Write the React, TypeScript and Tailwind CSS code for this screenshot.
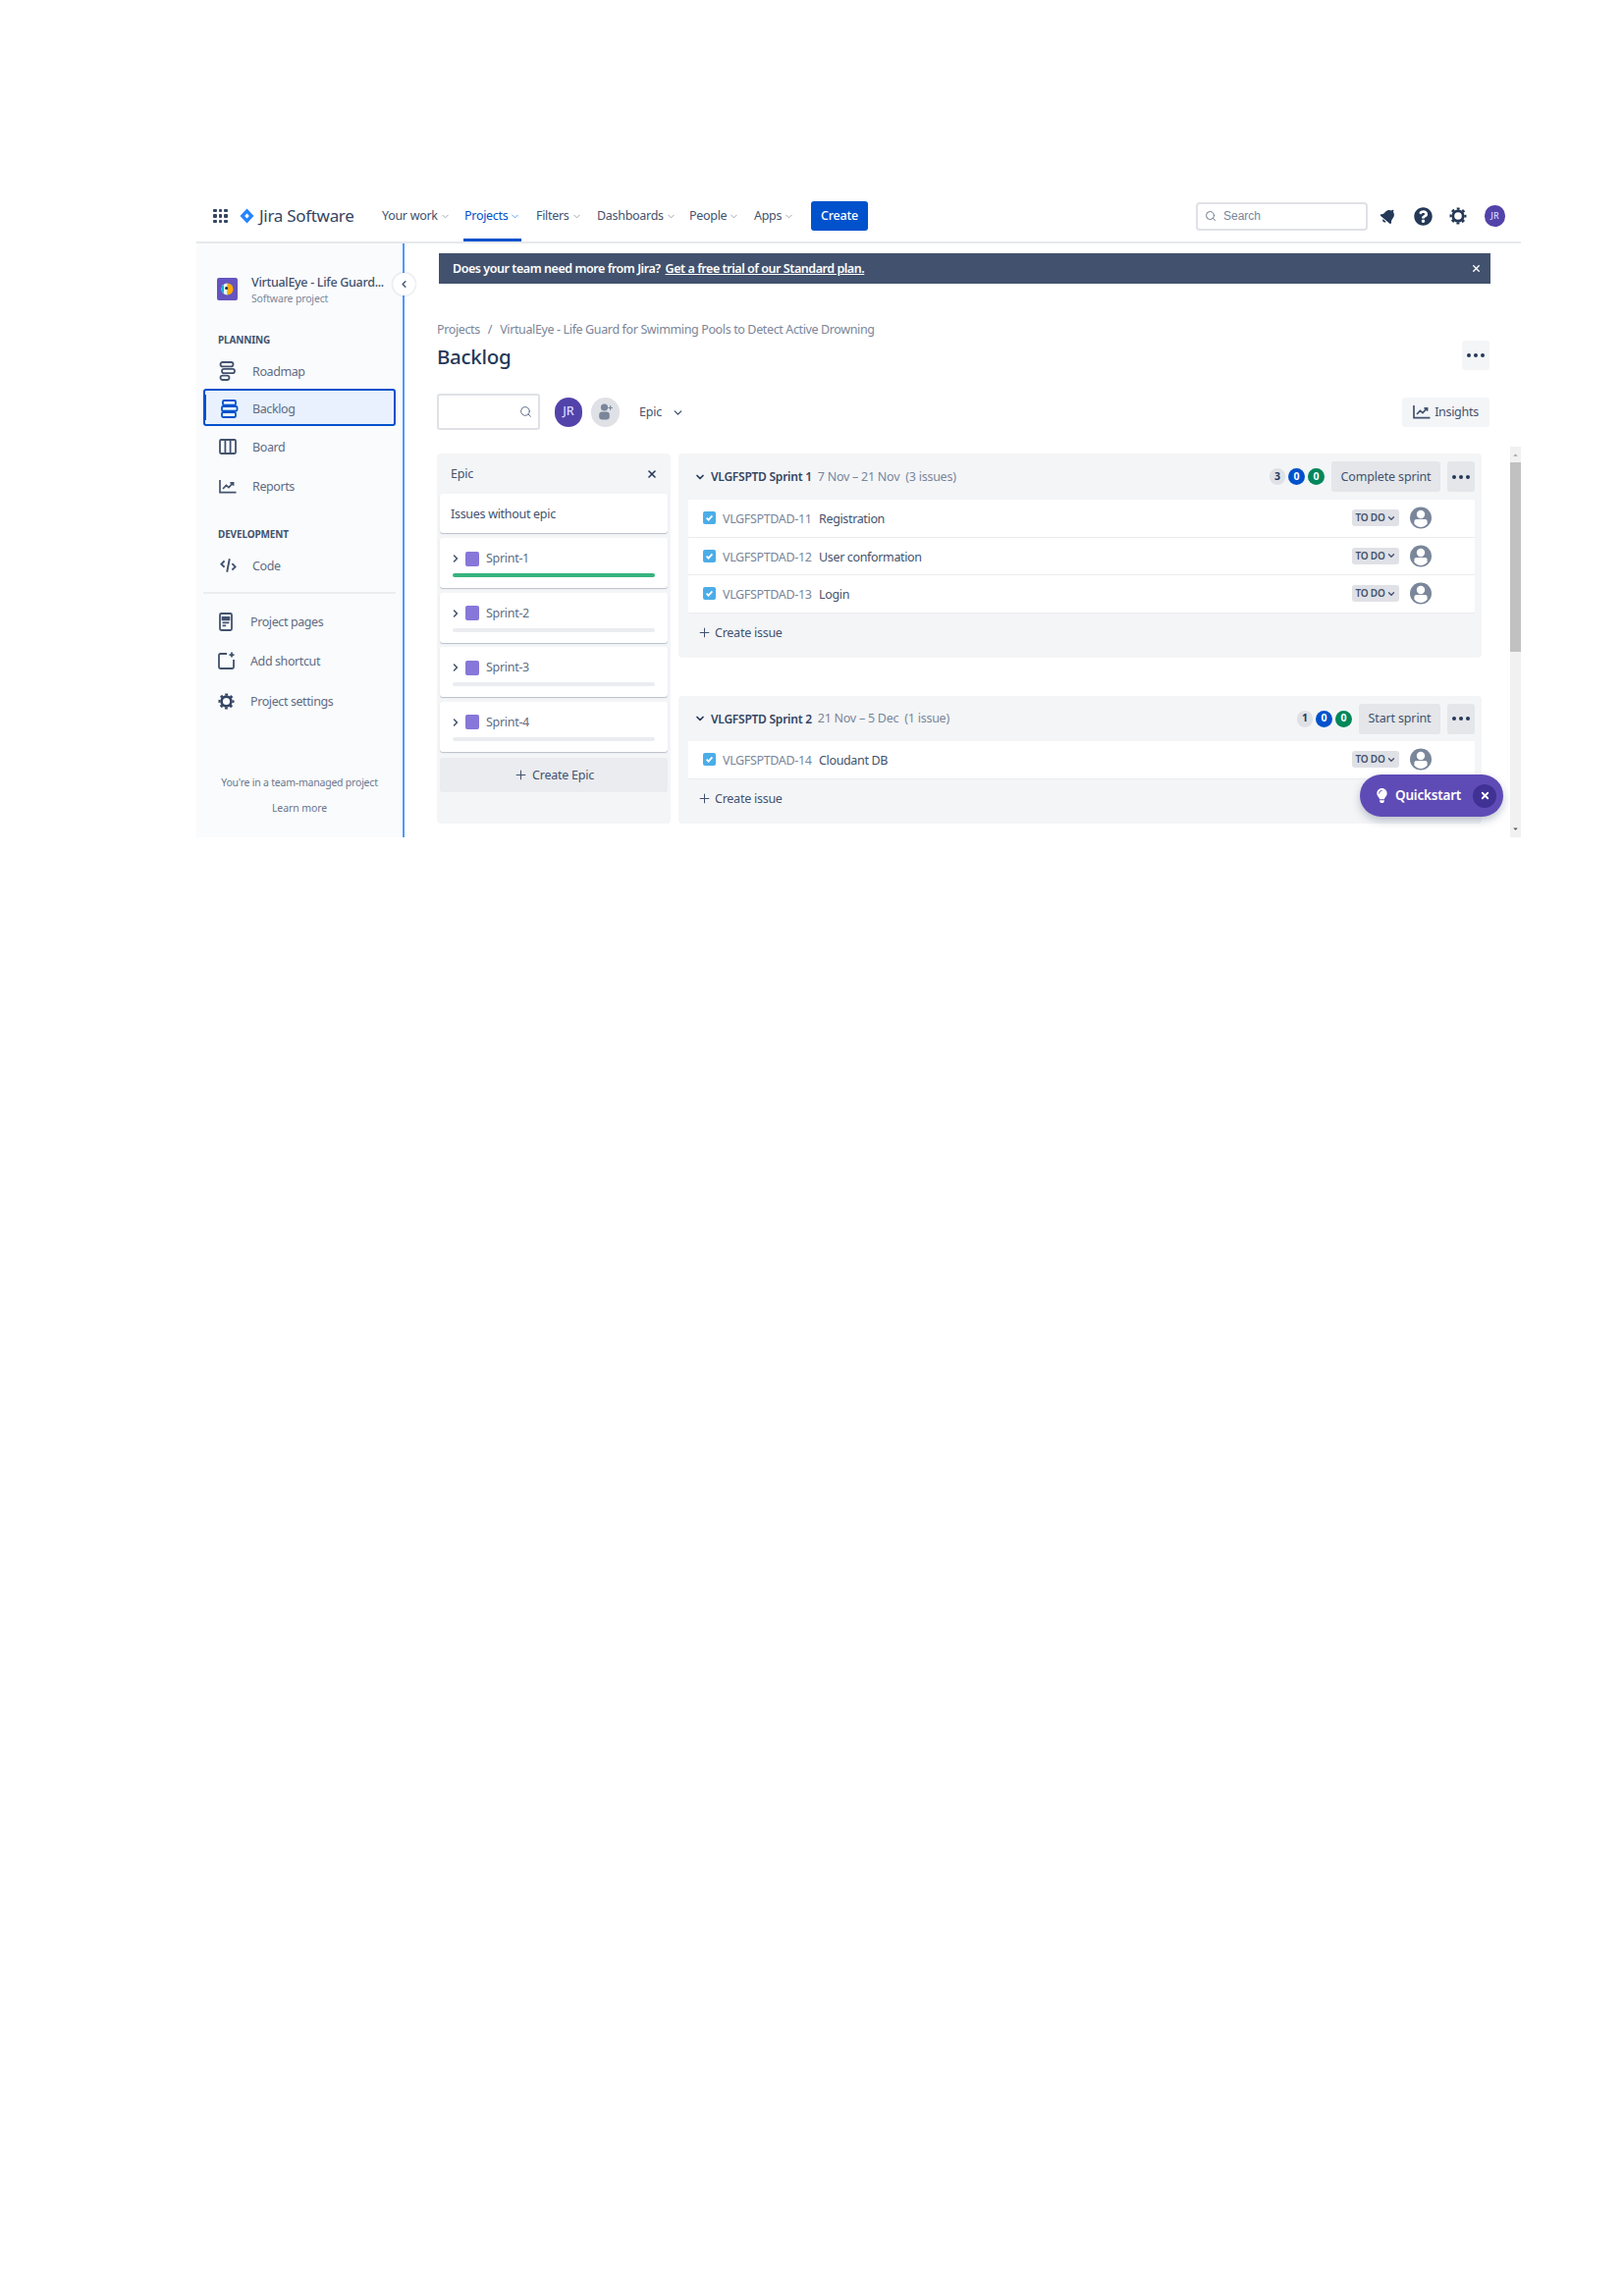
import { ChevronDown, ChevronLeft, ChevronRight, Plus, Search, X } from "lucide-react";
import { FaBell, FaLightbulb, FaQuestionCircle } from "react-icons/fa";

const navItems = [
  { label: "Your work", width: "w-[84px]" },
  { label: "Projects", width: "w-[73px]", active: true },
  { label: "Filters", width: "w-[62px]" },
  { label: "Dashboards", width: "w-[94px]" },
  { label: "People", width: "w-[66px]" },
  { label: "Apps", width: "w-[58px]" },
];

const RoadmapIcon = () => (
  <svg width="18" height="20" viewBox="0 0 18 20" fill="none" stroke="#42526e" strokeWidth="1.8">
    <rect x="1.5" y="1" width="13" height="4.4" rx="2.2" />
    <rect x="3" y="7.8" width="13" height="4.4" rx="2.2" />
    <rect x="1.5" y="14.6" width="9" height="4.4" rx="2.2" />
  </svg>
);

const BacklogIcon = () => (
  <svg width="18" height="19" viewBox="0 0 18 19" fill="none" stroke="#0052cc" strokeWidth="1.8">
    <rect x="2" y="1" width="13" height="4.6" rx="1.2" />
    <rect x="1" y="7" width="15.5" height="4.6" rx="1.2" />
    <rect x="1" y="13" width="14" height="5" rx="1.2" />
  </svg>
);

const BoardIcon = () => (
  <svg width="18" height="16" viewBox="0 0 18 16" fill="none" stroke="#42526e" strokeWidth="1.8">
    <rect x="1" y="1" width="16" height="14" rx="1.2" />
    <path d="M6.4 1v14M11.6 1v14" />
  </svg>
);

const ChartIcon = ({ color = "#42526e" }: { color?: string }) => (
  <svg width="18" height="15" viewBox="0 0 18 15" fill="none" stroke={color} strokeWidth="1.7">
    <path d="M1 1v12.6h16.5" />
    <path d="M4 10l3.4-3.6 2.6 2.2 4-4.4M11.4 3.8h3.2v3" />
  </svg>
);

const CodeIcon = () => (
  <svg width="17" height="16" viewBox="0 0 17 16" fill="none" stroke="#42526e" strokeWidth="1.9">
    <path d="M4.6 3.4L1.4 6.8l3.2 3M12.4 6.2l3.2 3.2-3.2 3.2M9.8 1.2L7.2 14.8" />
  </svg>
);

const PagesIcon = () => (
  <svg width="14" height="19" viewBox="0 0 14 19" fill="none" stroke="#42526e" strokeWidth="1.8">
    <rect x="1" y="1" width="12" height="17" rx="1.4" />
    <path d="M3.6 5h6.8v2.4H3.6z" fill="#42526e" />
    <path d="M3.6 10.4h6.8M3.6 13.4h3.6" />
  </svg>
);

const ShortcutIcon = () => (
  <svg width="17" height="18" viewBox="0 0 17 18" fill="none" stroke="#42526e" strokeWidth="1.8">
    <path d="M9 2H2.4C1.6 2 1 2.6 1 3.4v12.2c0 .8.6 1.4 1.4 1.4h12.2c.8 0 1.4-.6 1.4-1.4V8" />
    <path d="M14 .6v5M11.5 3.1h5" />
  </svg>
);

// ring plus a dashed outer circle, which reads as the eight teeth
const GearIcon = ({ size, color = "#253858" }: { size: number; color?: string }) => (
  <svg width={size} height={size} viewBox="0 0 18 18" fill="none" stroke={color}>
    <circle cx="9" cy="9" r="5.2" strokeWidth="2.8" />
    <circle cx="9" cy="9" r="7.4" strokeWidth="2.2" strokeDasharray="3 2.81" strokeDashoffset="1.5" />
  </svg>
);

const ProjectIcon = () => (
  <svg width="21" height="23" viewBox="0 0 21 23">
    <rect width="21" height="23" rx="2" fill="#6554c0" />
    <path d="M10.5 5.5a6 6 0 016 6 6 6 0 01-6 6z" fill="#ffab00" />
    <path d="M10.5 5.5a6 6 0 00-6 6 6 6 0 006 6z" fill="#e3fcef" />
    <path d="M4.5 11.5a6 6 0 012.5-4.8v9.6a6 6 0 01-2.5-4.8z" fill="#00b8d9" />
    <circle cx="9.6" cy="10.4" r="1.5" fill="#172b4d" />
  </svg>
);

const AddPersonIcon = () => (
  <svg width="16" height="17" viewBox="0 0 16 17" fill="#7a869a">
    <circle cx="6.5" cy="4" r="3.6" />
    <rect x="1.2" y="8.6" width="10.6" height="7.8" rx="3.2" />
    <path d="M12.6 2.2v4.6M10.3 4.5h4.6" stroke="#7a869a" strokeWidth="1.2" />
  </svg>
);

const Assignee = () => (
  <svg width="22" height="23" viewBox="0 0 22 23">
    <circle cx="11" cy="11.5" r="11" fill="#7a869a" />
    <circle cx="11" cy="8" r="4.2" fill="#fff" />
    <path d="M4.4 15c0-1.2 1-2 2.2-2h8.8c1.2 0 2.2.8 2.2 2v2.4a8 8 0 01-13.2 0z" fill="#fff" />
  </svg>
);

const IssueCheck = () => (
  <span className="flex h-[13px] w-[13px] shrink-0 items-center justify-center rounded-[2px] bg-[#4bade8]">
    <svg width="9" height="9" viewBox="0 0 9 9" fill="none" stroke="#fff" strokeWidth="1.8">
      <path d="M1.6 4.6l2 2 3.8-4.2" />
    </svg>
  </span>
);

const Dots = () => (
  <span className="flex gap-[3px]">
    <span className="h-[4px] w-[4px] rounded-full bg-[#253858]" />
    <span className="h-[4px] w-[4px] rounded-full bg-[#253858]" />
    <span className="h-[4px] w-[4px] rounded-full bg-[#253858]" />
  </span>
);

function SideItem({ icon, label, className = "", labelClass = "" }: { icon: React.ReactNode; label: string; className?: string; labelClass?: string }) {
  return (
    <div className={`flex h-[38px] items-center ${className}`}>
      <span className="flex w-[50px] shrink-0 justify-center">{icon}</span>
      <span className={`mt-[2px] text-[12.5px] tracking-[-0.4px] text-[#5e6c84] ${labelClass}`}>{label}</span>
    </div>
  );
}

function EpicCard({ name, done }: { name: string; done?: boolean }) {
  return (
    <div className="h-[51px] rounded-[3px] bg-white px-[13px] pt-[12px] shadow-[0_1px_1px_rgba(9,30,66,0.25)]">
      <div className="flex h-[18px] items-center">
        <ChevronRight size={12} strokeWidth={3} className="ml-[-3px] text-[#42526e]" />
        <span className="ml-[4px] h-[15px] w-[14px] rounded-[2px] bg-[#8777d9]" />
        <span className="ml-[7px] mt-[1px] text-[12.5px] tracking-[-0.3px] text-[#5e6c84]">{name}</span>
      </div>
      <div className={`mt-[6px] h-[4px] rounded-full ${done ? "bg-[#36b37e]" : "bg-[#ebecf0]"}`} />
    </div>
  );
}

function IssueRow({ id, title }: { id: string; title: string }) {
  return (
    <div className="flex h-[38.6px] items-center border-b border-[#ebecf0] bg-white pl-[15px]">
      <IssueCheck />
      <span className="ml-[7px] mt-[3px] w-[98px] text-[12.5px] tracking-[-0.35px] text-[#7a869a]">{id}</span>
      <span className="mt-[3px] text-[12.5px] tracking-[-0.35px] text-[#42526e]">{title}</span>
      <span className="ml-auto flex h-[17px] w-[48px] items-center justify-center gap-[1px] rounded-[3px] bg-[#dfe1e6] text-[10px] font-semibold tracking-[-0.2px] text-[#42526e]">
        TO DO
        <ChevronDown size={10} strokeWidth={3.2} />
      </span>
      <span className="ml-[11px] mr-[44px] flex">
        <Assignee />
      </span>
    </div>
  );
}

function CountBadges({ todo }: { todo: number }) {
  return (
    <div className="flex items-center gap-[3px] text-[10.5px] font-bold">
      <span className="flex h-[17px] w-[16px] items-center justify-center rounded-full bg-[#dfe1e6] text-[#253858]">{todo}</span>
      <span className="flex h-[17px] w-[17px] items-center justify-center rounded-full bg-[#0052cc] text-white">0</span>
      <span className="flex h-[17px] w-[17px] items-center justify-center rounded-full bg-[#00875a] text-white">0</span>
    </div>
  );
}

function SprintPanel({ name, dates, count, todo, action, actionWidth, headerHeight, children, className = "" }: {
  name: string;
  dates: string;
  count: string;
  todo: number;
  action: string;
  actionWidth: string;
  headerHeight: string;
  children: React.ReactNode;
  className?: string;
}) {
  return (
    <div className={`rounded-[4px] bg-[#f4f5f7] pl-[10px] pr-[7px] ${className}`}>
      <div className={`flex items-center ${headerHeight}`}>
        <ChevronDown size={12} strokeWidth={3.4} className="ml-[6px] text-[#253858]" />
        <span className="ml-[5px] mt-[1px] text-[12px] font-semibold tracking-[-0.25px] text-[#344563]">{name}</span>
        <span className="ml-[6px] mt-[1px] text-[12.5px] tracking-[-0.25px] text-[#7a869a]">{dates}</span>
        <span className="ml-[6px] mt-[1px] text-[12.5px] tracking-[-0.25px] text-[#7a869a]">{count}</span>
        <div className="ml-auto flex items-center">
          <CountBadges todo={todo} />
          <span className={`ml-[7px] flex h-[31px] items-center justify-center rounded-[3px] bg-[#e4e6ea] pt-[1px] text-[12.5px] tracking-[-0.15px] text-[#42526e] ${actionWidth}`}>
            {action}
          </span>
          <span className="ml-[7px] flex h-[31px] w-[28px] items-center justify-center rounded-[3px] bg-[#e4e6ea]">
            <Dots />
          </span>
        </div>
      </div>
      {children}
      <div className="flex h-[39px] items-center pl-[9px] text-[12.5px] tracking-[-0.25px] text-[#42526e]">
        <Plus size={15} strokeWidth={1.6} />
        <span className="ml-[3px] mt-[2px]">Create issue</span>
      </div>
    </div>
  );
}

export default function App() {
  return (
    <div className="min-h-[2339px] bg-white pl-[200px] pt-[204px] font-['Noto_Sans',sans-serif]">
      <div className="relative w-[1349px]">
        <header className="flex h-[44px] items-center border-b-2 border-[#e6e8ec] pb-[10px] pl-[17px]">
          <div className="grid w-[15px] grid-cols-3 gap-[2px]">
            {[1, 2, 3, 4, 5, 6, 7, 8, 9].map((n) => (
              <span key={n} className="h-[3.6px] w-[3.6px] rounded-[1px] bg-[#344563]" />
            ))}
          </div>
          <svg className="ml-[12px]" width="15" height="16" viewBox="0 0 15 16">
            <path d="M7.5 0.5l7 7.5-7 7.5-7-7.5z" fill="#2684ff" />
            <path d="M7.5 5.5l2.4 2.5-2.4 2.5-2.4-2.5z" fill="#fff" />
          </svg>
          <span className="ml-[5px] w-[125px] text-[17px] tracking-[-0.3px] text-[#344563]">Jira Software</span>
          {navItems.map((item) => (
            <div key={item.label} className={`relative flex h-full items-center text-[12.5px] tracking-[-0.3px] ${item.width} ${item.active ? "text-[#0052cc]" : "text-[#42526e]"}`}>
              {item.label}
              <ChevronDown size={11} strokeWidth={2} className={`ml-[2px] ${item.active ? "text-[#4c9aff]" : "text-[#97a0af]"}`} />
              {item.active && <span className="absolute bottom-[-10px] left-[-1px] h-[3px] w-[59px] bg-[#0052cc]" />}
            </div>
          ))}
          <span className="flex h-[30px] w-[58px] items-center justify-center rounded-[3px] bg-[#0052cc] text-[12.5px] font-medium tracking-[-0.2px] text-white">Create</span>
          <div className="ml-[334px] flex h-[29px] w-[175px] items-center rounded-[4px] border-2 border-[#dfe1e6] pl-[7px] font-['Liberation_Sans',sans-serif] text-[12px] text-[#7a869a]">
            <Search size={12} strokeWidth={1.8} className="text-[#5e6c84]" />
            <span className="ml-[7px]">Search</span>
          </div>
          <FaBell size={16} className="ml-[13px] rotate-[40deg] text-[#253858]" />
          <FaQuestionCircle size={19} className="ml-[18px] text-[#253858]" />
          <span className="ml-[17px] flex">
            <GearIcon size={18} />
          </span>
          <span className="ml-[18px] flex h-[22px] w-[21px] items-center justify-center rounded-full bg-[#5243aa] text-[9px] font-medium text-[#dcd6ff]">JR</span>
        </header>

        <div className="flex h-[605px]">
          <aside className="relative w-[212px] shrink-0 border-r-2 border-[#4c9aff] bg-[#fafbfc] px-[7px] pt-[34px]">
            <div className="flex h-[24px] items-center pl-[14px]">
              <ProjectIcon />
              <div className="ml-[14px] mt-[3px]">
                <div className="text-[12.5px] font-medium leading-[17px] tracking-[-0.3px] text-[#42526e]">VirtualEye - Life Guard...</div>
                <div className="text-[10.5px] leading-[17px] tracking-[-0.17px] text-[#7a869a]">Software project</div>
              </div>
            </div>
            <div className="mt-[31px] pl-[15px] text-[10px] font-bold leading-[18px] tracking-[-0.15px] text-[#42526e]">PLANNING</div>
            <div className="mt-[3px]">
              <SideItem icon={<RoadmapIcon />} label="Roadmap" className="pt-[2px]" />
              <SideItem icon={<BacklogIcon />} label="Backlog" labelClass="-ml-[2px]" className="relative rounded-[3px] border-2 border-[#0052cc] bg-[#deebff]/60 pt-[2px] before:absolute before:left-[-2px] before:top-[4px] before:h-[26px] before:w-[3px] before:bg-[#0052cc]" />
              <SideItem icon={<BoardIcon />} label="Board" className="mt-[1px] !h-[40px]" />
              <SideItem icon={<ChartIcon />} label="Reports" className="!h-[40px]" />
            </div>
            <div className="mt-[22px] pl-[15px] text-[10px] font-bold leading-[14px] tracking-[-0.15px] text-[#42526e]">DEVELOPMENT</div>
            <SideItem icon={<CodeIcon />} label="Code" className="mt-[6px]" />
            <div className="mt-[8px] h-[2px] bg-[#ebecf0]" />
            <div className="mt-[9px]">
              <SideItem icon={<PagesIcon />} label="Project pages" className="-ml-[2px]" />
              <SideItem icon={<ShortcutIcon />} label="Add shortcut" className="mt-[2px] -ml-[2px]" />
              <SideItem icon={<GearIcon size={17} color="#344563" />} label="Project settings" className="mt-[3px] -ml-[2px]" />
            </div>
            <div className="mt-[55px] text-center text-[10.5px] leading-[18px] tracking-[-0.22px] text-[#6b778c]">You're in a team-managed project</div>
            <div className="mt-[8px] text-center text-[10.5px] leading-[18px] tracking-[-0.1px] text-[#6b778c]">Learn more</div>
            <span className="absolute right-[-13px] top-[30px] flex h-[23px] w-[23px] items-center justify-center rounded-full bg-white shadow-[0_0_2px_rgba(9,30,66,0.3)]">
              <ChevronLeft size={11} strokeWidth={3} className="text-[#42526e]" />
            </span>
          </aside>

          <main className="flex min-w-0 flex-1 flex-col">
            <div className="px-[33px]">
              <div className="ml-[2px] mr-[-2px] mt-[10px] flex h-[31px] items-center bg-[#42526e] pl-[14px] pr-[9px] text-[12.5px] font-semibold tracking-[-0.45px] text-white">
                <span className="mt-[2px]">Does your team need more from Jira?</span>
                <span className="ml-[5px] mt-[2px] underline">Get a free trial of our Standard plan.</span>
                <X size={11} strokeWidth={3} className="ml-auto" />
              </div>
              <div className="mt-[38px] flex h-[18px] items-center text-[12.5px] tracking-[-0.37px] text-[#7a869a]">
                <span>Projects</span>
                <span className="mx-[8px]">/</span>
                <span>VirtualEye - Life Guard for Swimming Pools to Detect Active Drowning</span>
              </div>
              <div className="mt-[4px] flex h-[30px] items-center justify-between">
                <h1 className="mt-[-2px] text-[20.5px] font-medium tracking-[-0.3px] text-[#253858]">Backlog</h1>
                <span className="mr-[-1px] mt-[-4px] flex h-[30px] w-[28px] items-center justify-center rounded-[3px] bg-[#f4f5f7]">
                  <Dots />
                </span>
              </div>
              <div className="mt-[22px] flex h-[37px] items-center">
                <div className="flex h-[37px] w-[105px] items-center justify-end rounded-[3px] border-2 border-[#dfe1e6] pr-[6px]">
                  <Search size={13} strokeWidth={1.8} className="text-[#5e6c84]" />
                </div>
                <span className="ml-[15px] flex h-[30px] w-[28px] items-center justify-center rounded-full bg-[#5243aa] text-[12.5px] font-medium text-[#dcd6ff]">JR</span>
                <span className="ml-[9px] flex h-[30px] w-[29px] items-center justify-center rounded-full bg-[#dfe1e6]">
                  <AddPersonIcon />
                </span>
                <span className="ml-[20px] mt-[2px] text-[12.5px] tracking-[-0.2px] text-[#42526e]">Epic</span>
                <ChevronDown size={13} strokeWidth={2.6} className="ml-[10px] mt-[1px] text-[#42526e]" />
                <span className="ml-auto mr-[-1px] flex h-[30px] w-[89px] items-center justify-center gap-[4px] rounded-[3px] bg-[#f4f5f7] text-[12.5px] tracking-[-0.3px] text-[#42526e]">
                  <ChartIcon />
                  <span className="mt-[1px]">Insights</span>
                </span>
              </div>
            </div>

            <div className="mt-[17px] flex min-h-0 flex-1">
              <div className="ml-[33px] mt-[7px] flex items-start">
                <section className="h-[377px] w-[238px] rounded-[4px] bg-[#f4f5f7] px-[3px]">
                  <div className="flex h-[41px] items-center justify-between pl-[11px] pr-[10px] text-[12.5px] tracking-[-0.2px] text-[#42526e]">
                    <span className="mt-[1px]">Epic</span>
                    <X size={12} strokeWidth={3.2} className="text-[#253858]" />
                  </div>
                  <div className="flex h-[40px] items-center rounded-[3px] bg-white pl-[11px] pt-[2px] text-[12.5px] tracking-[-0.3px] text-[#42526e] shadow-[0_1px_1px_rgba(9,30,66,0.25)]">
                    Issues without epic
                  </div>
                  <div className="mt-[5px] flex flex-col gap-[4.6px]">
                    <EpicCard name="Sprint-1" done />
                    <EpicCard name="Sprint-2" />
                    <EpicCard name="Sprint-3" />
                    <EpicCard name="Sprint-4" />
                  </div>
                  <div className="mt-[6px] flex h-[35px] items-center justify-center rounded-[3px] bg-[#ebecf0] text-[12.5px] tracking-[-0.25px] text-[#42526e]">
                    <Plus size={15} strokeWidth={1.6} />
                    <span className="ml-[4px] mt-[2px]">Create Epic</span>
                  </div>
                </section>
                <div className="ml-[8px] w-[818px]">
                  <SprintPanel name="VLGFSPTD Sprint 1" dates="7 Nov – 21 Nov" count="(3 issues)" todo={3} action="Complete sprint" actionWidth="w-[111px]" headerHeight="h-[47px]" className="h-[208px]">
                    <IssueRow id="VLGFSPTDAD-11" title="Registration" />
                    <IssueRow id="VLGFSPTDAD-12" title="User conformation" />
                    <IssueRow id="VLGFSPTDAD-13" title="Login" />
                  </SprintPanel>
                  <SprintPanel name="VLGFSPTD Sprint 2" dates="21 Nov – 5 Dec" count="(1 issue)" todo={1} action="Start sprint" actionWidth="w-[83px]" headerHeight="h-[46px]" className="mt-[39px] h-[130px]">
                    <IssueRow id="VLGFSPTDAD-14" title="Cloudant DB" />
                  </SprintPanel>
                </div>
              </div>
              <div className="ml-auto flex w-[11px] flex-col bg-[#f1f1f1]">
                <ChevronDown size={9} fill="#a0a0a0" strokeWidth={0} className="mx-auto mt-[4px] rotate-180" />
                <div className="mt-[3px] h-[193px] bg-[#c1c1c1]" />
                <ChevronDown size={9} fill="#505050" strokeWidth={0} className="mx-auto mb-[4px] mt-auto" />
              </div>
            </div>
          </main>
        </div>

        <div className="absolute left-[1185px] top-[585px] flex h-[43px] w-[146px] items-center rounded-full bg-[#5f4bb6] pl-[15px] text-[13.5px] font-semibold tracking-[-0.2px] text-white shadow-[0_4px_8px_rgba(9,30,66,0.25)]">
          <FaLightbulb size={15} />
          <span className="ml-[6px]">Quickstart</span>
          <span className="ml-auto mr-[7px] flex h-[24px] w-[24px] items-center justify-center rounded-full bg-[#403294]">
            <X size={11} strokeWidth={4} />
          </span>
        </div>
      </div>
    </div>
  );
}
